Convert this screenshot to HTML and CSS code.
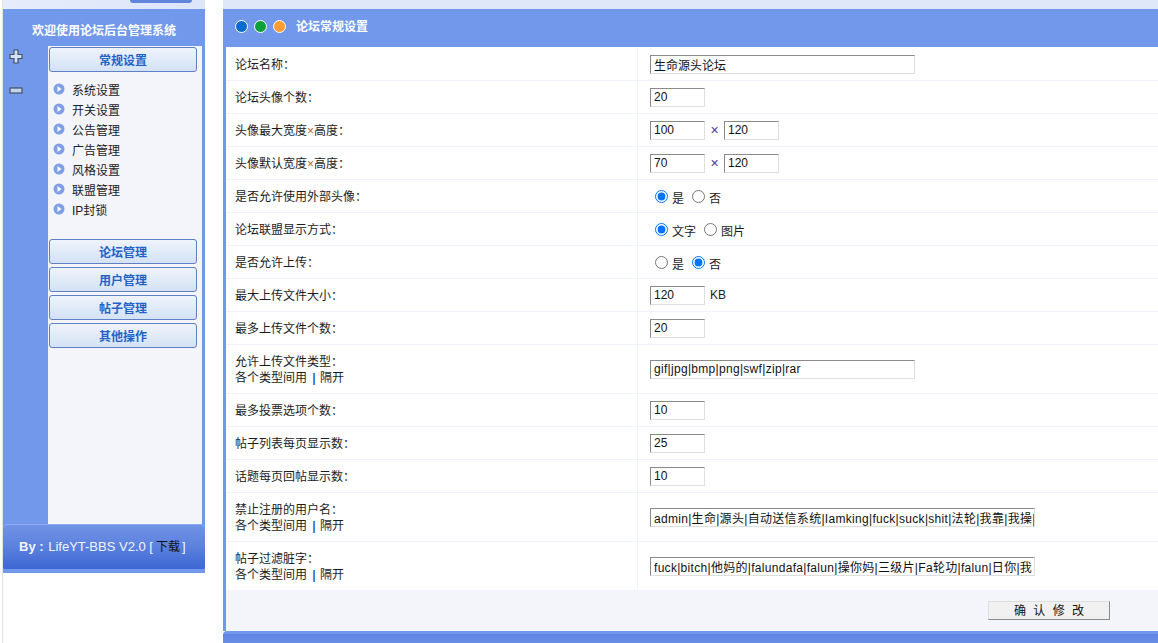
FILE: index.html
```html
<!DOCTYPE html>
<html lang="zh">
<head>
<meta charset="utf-8">
<title>论坛后台管理系统</title>
<link rel="stylesheet" href="styles.css">
</head>
<body>
<aside class="side">
  <div class="side-top"><span class="side-top-btn"></span></div>
  <h1 class="side-title">欢迎使用论坛后台管理系统</h1>
  <div class="side-body">
    <div class="rail">
      <svg class="rail-plus" width="14" height="15" viewBox="0 0 14 15"><path d="M5 1h4v4.500h4v4H9V14H5V9.500H1v-4h4z" fill="#cfe3f7" stroke="#4a4f63" stroke-width="1.200"/></svg>
      <svg class="rail-minus" width="14" height="7" viewBox="0 0 14 7"><rect x="1" y="1" width="12" height="5" fill="#bcd6ee" stroke="#4a4f63" stroke-width="1.200"/></svg>
    </div>
    <nav class="panel">
      <div class="nav-btn">常规设置</div>
      <ul class="menu">
        <li><svg class="bullet" viewBox="0 0 12 12"><circle cx="6" cy="6" r="5.500" fill="#7f9fe6"/><path d="M4.500 3l4 3-4 3z" fill="#fff"/></svg>系统设置</li>
        <li><svg class="bullet" viewBox="0 0 12 12"><circle cx="6" cy="6" r="5.500" fill="#7f9fe6"/><path d="M4.500 3l4 3-4 3z" fill="#fff"/></svg>开关设置</li>
        <li><svg class="bullet" viewBox="0 0 12 12"><circle cx="6" cy="6" r="5.500" fill="#7f9fe6"/><path d="M4.500 3l4 3-4 3z" fill="#fff"/></svg>公告管理</li>
        <li><svg class="bullet" viewBox="0 0 12 12"><circle cx="6" cy="6" r="5.500" fill="#7f9fe6"/><path d="M4.500 3l4 3-4 3z" fill="#fff"/></svg>广告管理</li>
        <li><svg class="bullet" viewBox="0 0 12 12"><circle cx="6" cy="6" r="5.500" fill="#7f9fe6"/><path d="M4.500 3l4 3-4 3z" fill="#fff"/></svg>风格设置</li>
        <li><svg class="bullet" viewBox="0 0 12 12"><circle cx="6" cy="6" r="5.500" fill="#7f9fe6"/><path d="M4.500 3l4 3-4 3z" fill="#fff"/></svg>联盟管理</li>
        <li><svg class="bullet" viewBox="0 0 12 12"><circle cx="6" cy="6" r="5.500" fill="#7f9fe6"/><path d="M4.500 3l4 3-4 3z" fill="#fff"/></svg>IP封锁</li>
      </ul>
      <div class="nav-group">
        <div class="nav-btn">论坛管理</div>
        <div class="nav-btn">用户管理</div>
        <div class="nav-btn">帖子管理</div>
        <div class="nav-btn">其他操作</div>
      </div>
    </nav>
  </div>
  <div class="side-foot"><div class="foot-inner"><b class="by">By :</b> LifeYT-BBS V2.0 [<span class="dl">下载</span>]</div></div>
</aside>

<main class="main">
  <div class="main-top"></div>
  <header class="main-head">
    <span class="dot dot-blue"></span><span class="dot dot-green"></span><span class="dot dot-orange"></span>
    <h2 class="main-title">论坛常规设置</h2>
  </header>
  <form class="form">
    <div class="row"><div class="lab">论坛名称：</div><div class="val"><input class="in in-m" value="生命源头论坛"></div></div>
    <div class="row"><div class="lab">论坛头像个数：</div><div class="val"><input class="in" value="20"></div></div>
    <div class="row"><div class="lab">头像最大宽度<span class="x">×</span>高度：</div><div class="val"><input class="in" value="100"><span class="times">×</span><input class="in" value="120"></div></div>
    <div class="row"><div class="lab">头像默认宽度<span class="x">×</span>高度：</div><div class="val"><input class="in" value="70"><span class="times">×</span><input class="in" value="120"></div></div>
    <div class="row"><div class="lab">是否允许使用外部头像：</div><div class="val"><label class="opt"><input type="radio" name="a" checked>是</label><label class="opt"><input type="radio" name="a">否</label></div></div>
    <div class="row"><div class="lab">论坛联盟显示方式：</div><div class="val"><label class="opt"><input type="radio" name="b" checked>文字</label><label class="opt"><input type="radio" name="b">图片</label></div></div>
    <div class="row"><div class="lab">是否允许上传：</div><div class="val"><label class="opt"><input type="radio" name="c">是</label><label class="opt"><input type="radio" name="c" checked>否</label></div></div>
    <div class="row"><div class="lab">最大上传文件大小：</div><div class="val"><input class="in" value="120"><span class="unit">KB</span></div></div>
    <div class="row"><div class="lab">最多上传文件个数：</div><div class="val"><input class="in" value="20"></div></div>
    <div class="row row-tall"><div class="lab">允许上传文件类型：<br>各个类型间用 <span class="pipe">|</span> 隔开</div><div class="val"><input class="in in-m in-wide" value="gif|jpg|bmp|png|swf|zip|rar"></div></div>
    <div class="row"><div class="lab">最多投票选项个数：</div><div class="val"><input class="in" value="10"></div></div>
    <div class="row"><div class="lab">帖子列表每页显示数：</div><div class="val"><input class="in" value="25"></div></div>
    <div class="row"><div class="lab">话题每页回帖显示数：</div><div class="val"><input class="in" value="10"></div></div>
    <div class="row row-tall"><div class="lab">禁止注册的用户名：<br>各个类型间用 <span class="pipe">|</span> 隔开</div><div class="val"><input class="in in-l in-wide" value="admin|生命|源头|自动送信系统|Iamking|fuck|suck|shit|法轮|我靠|我操|我日|他妈的"></div></div>
    <div class="row row-tall row-last"><div class="lab">帖子过滤脏字：<br>各个类型间用 <span class="pipe">|</span> 隔开</div><div class="val"><input class="in in-l in-wide" value="fuck|bitch|他妈的|falundafa|falun|操你妈|三级片|Fa轮功|falun|日你|我日|我操"></div></div>
    <div class="actions"><button type="button" class="submit">确 认 修 改</button></div>
  </form>
  <div class="main-foot"></div>
</main>
</body>
</html>
```

FILE: styles.css
```css
* { box-sizing: border-box; }
html, body { margin: 0; padding: 0; height: 643px; overflow: hidden; background: #fff; }
body {
  display: flex;
  align-items: flex-start;
  padding-left: 2px;
  font: 12px/16px "Liberation Sans", "Noto Sans CJK SC", sans-serif;
  color: #1c1c1c;
}
body::before {
  content: "";
  width: 1px;
  height: 643px;
  background: #e2e2e2;
  flex: none;
}

/* sidebar */
.side { width: 202px; flex: none; background: #7198ea; }
.side-top {
  height: 9px;
  background: linear-gradient(90deg, #e6ecfa, #dce6f8);
  display: flex;
  justify-content: flex-end;
  padding-right: 13px;
}
.side-top-btn {
  width: 62px;
  height: 3px;
  background: #5f86dc;
  border-radius: 0 0 8px 8px;
}
.side-title {
  margin: 0;
  height: 37px;
  padding: 14px 0 0 0;
  font-size: 12px;
  line-height: 16px;
  font-weight: bold;
  color: #fff;
  text-align: center;
}
.side-body { display: flex; height: 478px; padding-right: 3px; }
.rail { width: 45px; flex: none; display: flex; flex-direction: column; padding: 3px 0 0 6px; }
.rail-minus { margin-top: 23px; }
.panel { flex: 1; background: #f4f5fb; padding: 1px 5px 0 1px; }
.nav-btn {
  height: 25px;
  border: 1px solid #5f7fc8;
  border-radius: 3px;
  background: linear-gradient(180deg, #eff3fb, #d3e2f5);
  color: #1f63c9;
  font-weight: bold;
  line-height: 25px;
  padding-top: 1px;
  text-align: center;
}
.menu { list-style: none; margin: 0; padding: 9px 0 0 4px; height: 167px; }
.menu li { height: 20px; display: flex; align-items: flex-start; line-height: 20px; color: #222; }
.bullet { width: 12px; height: 12px; margin: 2px 7px 0 0; flex: none; }
.nav-group { display: flex; flex-direction: column; gap: 3px; }
.side-foot { height: 49px; padding-bottom: 4px; background: #7198ea; }
.foot-inner {
  height: 45px;
  border-radius: 5px 5px 2px 2px;
  border-top: 1px solid #8fabee;
  background: linear-gradient(180deg, #7093e6 0%, #5e83de 45%, #3c66d4 100%);
  color: #f2f5ff;
  font-size: 13px;
  line-height: 43px;
  padding-left: 16px;
  white-space: nowrap;
}
.by { margin-right: 1px; }
.dl { color: #111; font-size: 12px; margin: 0 2px 0 3px; }

/* main */
.main { margin-left: 18px; width: 935px; flex: none; height: 643px; display: flex; flex-direction: column; }
.main-top { height: 9px; background: #dfe8f9; flex: none; }
.main-head {
  height: 38px;
  flex: none;
  background: #7198ea;
  display: flex;
  align-items: center;
  padding-left: 12px;
  gap: 6px;
}
.dot { width: 13px; height: 13px; border-radius: 50%; border: 1.500px solid #fff; flex: none; margin-top: -3px; }
.dot-blue { background: #0b6cd0; }
.dot-green { background: #0fa03c; }
.dot-orange { background: #ff9c33; }
.main-title { margin: -3px 0 0 4px; font-size: 12px; line-height: 16px; font-weight: bold; color: #fff; }
.form { flex: 1; border-left: 3px solid #7198ea; display: flex; flex-direction: column; padding-top: 1px; background: #fff; }
.row {
  display: flex;
  height: 33px;
  flex: none;
  border-bottom: 1px solid #f1f3fa;
  background: #fff;
}
.row-tall { height: 49px; }
.row-last { border-bottom: 0; height: 48px; }
.lab {
  width: 412px;
  flex: none;
  border-right: 1px solid #f1f3fa;
  padding-left: 9px;
  align-self: stretch;
  padding-top: 9px;
}
.row-tall .lab { padding-top: 9px; }
.val { flex: 1; display: flex; align-items: center; padding-left: 12px; }
.x { color: #b5651d; }
.in {
  width: 55px;
  height: 19px;
  padding: 0 0 0 3px;
  border-width: 1px;
  border-style: solid;
  border-color: #8a8a8a #dedede #dedede #8a8a8a;
  background: #fff;
  font: 12px "Liberation Sans", "Noto Sans CJK SC", sans-serif;
  color: #111;
  outline: 0;
}
.in-m { width: 265px; }
.in-l { width: 385px; }
.in-wide { letter-spacing: .3px; }
.times { width: 19px; text-align: center; color: #4b3b8f; font-size: 14px; }
.unit { margin-left: 5px; }
.opt { display: flex; align-items: center; margin-right: 3px; padding-top: 6px; }
.opt input { width: 13px; height: 13px; margin: 0 4px 0 5px; position: relative; top: -3px; }
.pipe { color: #1f63c9; font-weight: bold; margin: 0 1px 0 2px; }
.actions {
  flex: 1;
  background: #f4f5fb;
  display: flex;
  justify-content: flex-end;
  align-items: flex-start;
  padding: 11px 48px 0 0;
}
.submit {
  width: 122px;
  height: 19px;
  padding: 0;
  border-width: 1px;
  border-style: solid;
  border-color: #dedede #8a8a8a #8a8a8a #dedede;
  background: #f1f1f1;
  font: 12px/16px "Liberation Sans", "Noto Sans CJK SC", sans-serif;
  word-spacing: 4px;
  color: #111;
}
.main-foot {
  height: 12px;
  flex: none;
  background: linear-gradient(180deg, #7198ea 0, #7198ea 3px, #5d84e2 3px, #6a8fe8 100%);
  border-radius: 4px 0 0 0;
}
```
